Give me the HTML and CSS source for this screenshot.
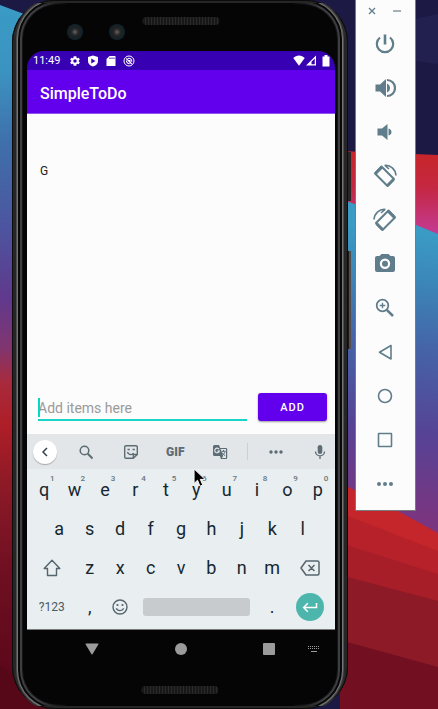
FILE: index.html
```html
<!DOCTYPE html>
<html lang="en">
<head>
<meta charset="utf-8">
<meta name="viewport" content="width=device-width, initial-scale=1">
<title>SimpleToDo</title>
<link rel="stylesheet" href="styles.css">
</head>
<body>
<svg class="wallpaper" viewBox="0 0 438 709" preserveAspectRatio="none" aria-hidden="true">
  <defs>
    <linearGradient id="left" x1="0" y1="0" x2="0" y2="709" gradientUnits="userSpaceOnUse">
      <stop offset="0" stop-color="#3a9cc6"/><stop offset=".1" stop-color="#3b93c0"/>
      <stop offset=".2" stop-color="#3f70ac"/><stop offset=".32" stop-color="#4c559f"/>
      <stop offset=".42" stop-color="#60398d"/><stop offset=".49" stop-color="#80356f"/>
      <stop offset=".54" stop-color="#a82a3c"/><stop offset=".6" stop-color="#ae1e27"/>
      <stop offset=".68" stop-color="#8e1a27"/><stop offset=".8" stop-color="#701022"/>
      <stop offset="1" stop-color="#560518"/>
    </linearGradient>
    <linearGradient id="right" x1="430" y1="235" x2="395" y2="515" gradientUnits="userSpaceOnUse">
      <stop offset="0" stop-color="#3a9bc4"/><stop offset=".17" stop-color="#3b86b9"/>
      <stop offset=".4" stop-color="#4564a7"/><stop offset=".7" stop-color="#564396"/>
      <stop offset="1" stop-color="#7a3580"/>
    </linearGradient>
    <linearGradient id="band" x1="0" y1="155" x2="0" y2="236" gradientUnits="userSpaceOnUse">
      <stop offset="0" stop-color="#c8262b"/><stop offset=".4" stop-color="#c42741"/>
      <stop offset="1" stop-color="#c43c98"/>
    </linearGradient>
  </defs>
  <path fill="#1c1a45" d="M0 0h438v709H0z"/>
  <path fill="#22204f" d="M410 20l28-6v50l-28-4z"/>
  <path fill="url(#left)" d="M0 5l24 9v695H0z"/>
  <path fill="url(#band)" d="M340 151l98 4v90h-98z"/>
  <path fill="url(#right)" d="M340 199l76 26 22 9v320h-98z"/>
  <path fill="#c4262b" d="M340 483l56 27 42 23v176h-98z"/>
  <path fill="#b72129" d="M340 513l98 38v158h-98z"/>
  <path fill="#a71e29" d="M340 543l98 31v135h-98z"/>
  <path fill="#8c1a27" d="M340 575l98 26v108h-98z"/>
  <path fill="#721022" d="M340 640l98 27v42h-98z"/>
  <path fill="#560818" d="M0 665l60 44H0z"/>
</svg>

<div class="desktop">
  <div class="phone">
    <span class="side-key side-key-power"></span>
    <span class="side-key side-key-volume"></span>
    <div class="bezel">
      <span class="camera"></span>
      <span class="camera"></span>
      <span class="speaker"></span>
    </div>

    <div class="screen">
      <div class="status-bar">
        <span class="time">11:49</span>
        <svg width="12" height="12" viewBox="0 0 24 24"><path fill="currentColor" fill-rule="evenodd" d="M19.4 13l.1-1-.1-1 2.300-1.700-2.200-3.800-2.700 1.100-1.700-1L14.700 2.700H9.300L8.900 5.600l-1.700 1-2.700-1.100-2.200 3.800L4.600 11l-.1 1 .1 1-2.300 1.700 2.200 3.800 2.700-1.100 1.700 1 .4 2.900h5.400l.4-2.900 1.700-1 2.700 1.100 2.200-3.800zM12 15.500a3.500 3.500 0 1 1 0-7 3.500 3.500 0 0 1 0 7z"/></svg>
        <svg width="12" height="12" viewBox="0 0 24 24"><path fill="currentColor" fill-rule="evenodd" d="M12 1L2 4v8c0 5.500 4 9.500 10 11 6-1.500 10-5.500 10-11V4zM8.500 7l8.500 5-8.500 5z"/></svg>
        <svg width="12" height="12" viewBox="0 0 24 24"><path fill="currentColor" fill-rule="evenodd" d="M20 2H9L3 8v14h17a1 1 0 0 0 1-1V3a1 1 0 0 0-1-1zM9 5h2v3H9zm4 0h2v3h-2zm4 0h2v3h-2z"/></svg>
        <svg width="12" height="12" viewBox="0 0 24 24" fill="none" stroke="currentColor"><circle cx="12" cy="12" r="10" stroke-width="2"/><path stroke-width="2.200" d="M6.500 7l11 11M9.500 7c4-1.500 9 1.500 7.800 6.500M6.800 11c0 4 3 6.500 6.500 6.200M11 11h3v3"/></svg>
        <span class="status-gap"></span>
        <svg width="12" height="11" viewBox="0 0 24 22"><path fill="currentColor" d="M12 21.500L.5 6C7-1 17-1 23.500 6z"/></svg>
        <svg width="10" height="11" viewBox="0 0 20 22"><path fill="currentColor" fill-rule="evenodd" d="M20 1v20H0zM17.500 7v11.500H11v-5z"/></svg>
        <svg class="battery" width="8" height="12" viewBox="0 0 16 24"><path fill="currentColor" d="M5 0h6v3h4v20H1V3h4z"/></svg>
      </div>
      <header class="app-bar"><h1>SimpleToDo</h1></header>
      <main class="content">
        <ul class="items"><li>G</li></ul>
        <form class="add-form">
          <div class="field">
            <input type="text" aria-label="Add items here" placeholder="Add items here">
            <span class="caret"></span>
          </div>
          <button class="add" type="button">ADD</button>
        </form>
      </main>

      <section class="keyboard" aria-label="Keyboard">
        <div class="tools">
          <button class="tool collapse" aria-label="Collapse"><svg width="10" height="12" viewBox="0 0 10 12"><path d="M7 2L3 6l4 4" fill="none" stroke="#37434a" stroke-width="1.500"/></svg></button>
          <button class="tool" aria-label="Search"><svg width="16" height="16" viewBox="0 0 16 16" fill="none" stroke="currentColor"><circle cx="6.500" cy="6.500" r="4.300" stroke-width="1.500"/><path stroke-width="2" d="M9.800 9.800l4.700 4.700"/></svg></button>
          <button class="tool" aria-label="Stickers"><svg width="16" height="16" viewBox="0 0 16 16" fill="none" stroke="currentColor" stroke-width="1.400"><path d="M3 1.700h10q1.300 0 1.300 1.300v7.500l-4 3.800H3q-1.300 0-1.300-1.300V3q0-1.300 1.300-1.300zM14 10.500h-3.700v3.600M4.500 8c.7 3 4.500 3.500 6 1"/><path d="M4.500 5.500h2.300M9.500 5.500h2.300"/></svg></button>
          <button class="tool gif">GIF</button>
          <button class="tool" aria-label="Translate"><svg width="16" height="16" viewBox="0 0 16 16"><path fill="currentColor" d="M2.500 1H7l1.200 3H14q1.200 0 1.200 1.200v8.600Q15.200 15 14 15H8.800L8 12H2.500Q1 12 1 10.500v-8Q1 1 2.500 1z"/><path fill="#e2e6e9" d="M8.500 5H14v9H9.800l1.400-2z"/><path fill="none" stroke="#e2e6e9" stroke-width="1.200" d="M7 5.200A2.300 2.300 0 1 0 7.300 7H5.200"/><path fill="none" stroke="currentColor" d="M9.500 7.300h4M11.500 6v1.300M13 7.500c-.3 1.500-1 2.500-2.600 3.800M10 8.500c1 1.500 2 2.500 3.200 3.300"/></svg></button>
          <span class="divider"></span>
          <button class="tool" aria-label="More"><svg width="14" height="4" viewBox="0 0 14 4" fill="currentColor"><circle cx="2" cy="2" r="1.700"/><circle cx="7" cy="2" r="1.700"/><circle cx="12" cy="2" r="1.700"/></svg></button>
          <button class="tool" aria-label="Voice input"><svg width="12" height="16" viewBox="0 0 12 16"><rect x="3.700" y="1" width="4.600" height="9" rx="2.300" fill="currentColor"/><path fill="none" stroke="currentColor" stroke-width="1.300" d="M1.500 7.500a4.500 4.300 0 0 0 9 0M6 12v3"/></svg></button>
        </div>
        <div class="row">
          <button class="key">q<sup>1</sup></button><button class="key">w<sup>2</sup></button><button class="key">e<sup>3</sup></button><button class="key">r<sup>4</sup></button><button class="key">t<sup>5</sup></button><button class="key">y<sup>6</sup></button><button class="key">u<sup>7</sup></button><button class="key">i<sup>8</sup></button><button class="key">o<sup>9</sup></button><button class="key">p<sup>0</sup></button>
        </div>
        <div class="row row-inset">
          <button class="key">a</button><button class="key">s</button><button class="key">d</button><button class="key">f</button><button class="key">g</button><button class="key">h</button><button class="key">j</button><button class="key">k</button><button class="key">l</button>
        </div>
        <div class="row">
          <button class="key key-wide" aria-label="Shift"><svg width="18" height="18" viewBox="0 0 18 18"><path fill="none" stroke="#55656d" stroke-width="1.400" stroke-linejoin="round" d="M9 1.200L1.200 9.500H4.500v7h9v-7h3.300z"/></svg></button><button class="key">z</button><button class="key">x</button><button class="key">c</button><button class="key">v</button><button class="key">b</button><button class="key">n</button><button class="key">m</button><button class="key key-wide" aria-label="Backspace"><svg width="20" height="16" viewBox="0 0 20 16"><path fill="none" stroke="#55656d" stroke-width="1.500" stroke-linejoin="round" d="M6 1h11.500q1.500 0 1.500 1.500v11q0 1.500-1.500 1.500H6L1 8zM8.500 5l6 6M14.500 5l-6 6"/></svg></button>
        </div>
        <div class="row">
          <button class="key key-wide key-symbols">?123</button><button class="key">,</button><button class="key" aria-label="Emoji"><svg width="16" height="16" viewBox="0 0 16 16"><circle cx="8" cy="8" r="7" fill="none" stroke="#55656d" stroke-width="1.400"/><circle cx="5.500" cy="6" r="1.100" fill="#55656d"/><circle cx="10.500" cy="6" r="1.100" fill="#55656d"/><path fill="none" stroke="#55656d" stroke-width="1.300" d="M4.300 9.300c1.200 3 6.200 3 7.400 0"/></svg></button><button class="key key-space" aria-label="Space"><span></span></button><button class="key">.</button><button class="key key-wide" aria-label="Enter"><span class="enter"><svg width="16" height="12" viewBox="0 0 16 12"><path fill="none" stroke="#fff" stroke-width="1.500" d="M14.500 2v4.500H2M5.800 2.300L1.600 6.500l4.200 4.200"/></svg></span></button>
        </div>
        <svg class="pointer" width="14" height="20" viewBox="0 0 15 22"><path fill="#000" stroke="#fff" d="M1 1v16l3.800-3.600L7.500 20l3-1.200L7.800 12.500H13z"/></svg>
      </section>
    </div>

    <nav class="nav-bar" aria-label="System">
      <button aria-label="Back"><svg width="14" height="12" viewBox="0 0 14 12"><path fill="#9b9b9b" d="M1 .5h12q.7.2.3 1L7.500 11.300q-.5.600-1 0L.7 1.500Q.3.700 1 .5z"/></svg></button>
      <button aria-label="Home"><svg width="12" height="12" viewBox="0 0 12 12"><circle cx="6" cy="6" r="6" fill="#9b9b9b"/></svg></button>
      <button aria-label="Overview"><svg width="12" height="12" viewBox="0 0 12 12"><rect width="12" height="12" rx="1" fill="#9b9b9b"/></svg></button>
      <button class="switch" aria-label="Switch keyboard"><svg width="14" height="8" viewBox="0 0 14 8"><path fill="none" stroke="#9b9b9b" stroke-dasharray="1 1" d="M1 1.500h12M1 3.500h12"/><path stroke="#9b9b9b" d="M4 6.500h6"/></svg></button>
    </nav>
    <span class="speaker speaker-bottom"></span>
  </div>

  <aside class="emulator" aria-label="Emulator controls">
    <div class="window-controls">
      <button aria-label="Close"><svg width="8" height="8" viewBox="0 0 8 8"><path stroke="currentColor" stroke-width="1.300" d="M1 1l6 6M7 1L1 7"/></svg></button>
      <button aria-label="Minimize"><svg width="8" height="8" viewBox="0 0 8 8"><path stroke="#a4b1b7" stroke-width="2" d="M0 4h8"/></svg></button>
    </div>
    <button aria-label="Power"><svg width="22" height="22" viewBox="0 0 22 22" fill="none" stroke="currentColor"><path stroke-width="2.200" d="M6 4.500a8.200 8.200 0 1 0 10 0"/><path stroke-width="2.600" d="M11 1.500v10"/></svg></button>
    <button aria-label="Volume up"><svg width="22" height="22" viewBox="0 0 22 22"><path fill="currentColor" d="M1.500 7.500H6L12 2v18l-6-5.500H1.500zM13 6.500q3 1.500 3 4.500t-3 4.500z"/><path fill="none" stroke="currentColor" stroke-width="2.200" d="M13 3a8 8 0 0 1 0 16"/></svg></button>
    <button aria-label="Volume down"><svg width="22" height="22" viewBox="0 0 22 22"><path fill="currentColor" d="M3.500 7.500H8L13.500 3v16L8 14.500H3.500zM14.500 7.500q3 1 3 3.500t-3 3.500z"/></svg></button>
    <button aria-label="Rotate left"><svg width="24" height="24" viewBox="0 0 24 24" fill="none" stroke="currentColor"><path stroke-width="2" stroke-linejoin="round" d="M8.500 2.500l12.500 12.500-6.500 7L2 9.500z"/><path stroke-width="3" d="M9 3L2.500 9.500M20.500 15.500L14.500 21.500"/><path stroke-width="1.600" d="M11.500 1.500c6-.8 11 3.700 11.500 10M12 1.500l4 3.500"/></svg></button>
    <button aria-label="Rotate right"><svg width="24" height="24" viewBox="0 0 24 24" fill="none" stroke="currentColor"><path stroke-width="2" stroke-linejoin="round" d="M15.500 2.500L3 15l6.500 7L22 9.500z"/><path stroke-width="3" d="M15 3l6.500 6.500M3.500 15.500l6 6"/><path stroke-width="1.600" d="M12.500 1.500C6.500.7 1.500 5.200 1 11.500M12 1.500L8 5"/></svg></button>
    <button aria-label="Screenshot"><svg width="22" height="22" viewBox="0 0 22 22"><path fill="currentColor" fill-rule="evenodd" d="M7.500 1h7l2 2H19q2 0 2 2v12q0 2-2 2H3q-2 0-2-2V5q0-2 2-2h2.500zM11 5.500a5.200 5.200 0 1 0 0 10.400A5.200 5.200 0 0 0 11 5.500zM11 7.700a3 3 0 1 1 0 6a3 3 0 0 1 0-6z" /></svg></button>
    <button aria-label="Zoom"><svg width="22" height="22" viewBox="0 0 22 22" fill="none" stroke="currentColor"><circle cx="8.500" cy="8.500" r="5.800" stroke-width="1.800"/><path stroke-width="2.500" d="M12.800 12.800l6.200 6.200"/><path stroke-width="1.300" d="M8.500 5.700v5.600M5.700 8.500h5.600"/></svg></button>
    <button aria-label="Back"><svg width="22" height="22" viewBox="0 0 22 22"><path fill="none" stroke="currentColor" stroke-width="1.600" stroke-linejoin="round" d="M17 4.500v13.500L5.500 11.200z"/></svg></button>
    <button aria-label="Home"><svg width="22" height="22" viewBox="0 0 22 22"><circle cx="11" cy="11" r="6.500" fill="none" stroke="currentColor" stroke-width="1.600"/></svg></button>
    <button aria-label="Overview"><svg width="22" height="22" viewBox="0 0 22 22"><rect x="4.500" y="4.500" width="13" height="13" rx=".5" fill="none" stroke="currentColor" stroke-width="1.600"/></svg></button>
    <button aria-label="More"><svg width="16" height="4" viewBox="0 0 16 4" fill="currentColor"><circle cx="2" cy="2" r="2"/><circle cx="8" cy="2" r="2"/><circle cx="14" cy="2" r="2"/></svg></button>
  </aside>
</div>
</body>
</html>
```
FILE: styles.css
```css
* { box-sizing: border-box; }

body {
  margin: 0;
  background: #1c1a45;
  font-family: Roboto, "Liberation Sans", sans-serif;
  overflow: hidden;
}

button {
  display: flex;
  align-items: center;
  justify-content: center;
  margin: 0;
  padding: 0;
  border: 0;
  background: none;
  color: inherit;
  font: inherit;
}

svg { display: block; flex: none; }

.wallpaper {
  position: fixed;
  inset: 0;
  width: 100%;
  height: 100%;
}

.desktop {
  position: relative;
  display: flex;
  align-items: flex-start;
  gap: 7px;
  min-height: 100vh;
  padding: 0 22px 0 12px;
}

/* Phone body */
.phone {
  position: relative;
  flex: 1;
  align-self: stretch;
  display: flex;
  flex-direction: column;
  min-width: 0;
  padding: 0 13px 0 15px;
  border-radius: 42px;
  background: #050505;
  box-shadow:
    inset 0 0 0 1px #0c0c0c,
    inset 0 0 0 3px #262626;
}

/* Metal rings run down the sides and fade out along the short edges */
.phone::before {
  content: "";
  position: absolute;
  inset: -3px 3px;
  border-radius: 42px;
  box-shadow:
    inset 0 0 0 1px #262626,
    inset 0 0 0 2px #4c4c4c,
    inset 0 0 0 3px #767676,
    inset 0 0 0 5px #080808,
    inset 0 0 0 7px #3d3e42,
    inset 0 0 0 8px #161616;
  clip-path: inset(6px 0);
  mask-image: linear-gradient(90deg, #000 24px, transparent 54px calc(100% - 54px), #000 calc(100% - 24px));
}

.bezel {
  position: relative;
  display: flex;
  gap: 26px;
  height: 51px;
  padding: 24px 0 0 40px;
}

.camera {
  width: 16px;
  height: 16px;
  border-radius: 50%;
  background: radial-gradient(circle, #555 0 1px, #2a2a2c 3px, #202020 5px, #14222a 6px);
}

.speaker {
  position: absolute;
  top: 17px;
  left: 50%;
  width: 77px;
  height: 8px;
  border-radius: 4px;
  background: repeating-linear-gradient(90deg, #2a2a2a 0 1px, #181818 1px 3px);
  transform: translateX(-50%);
}

.speaker-bottom { top: auto; bottom: 15px; }

.side-key {
  position: absolute;
  left: 100%;
  width: 3px;
  background: #292526;
}

.side-key-power { top: 152px; height: 49px; }
.side-key-volume { top: 251px; height: 98px; background: #554d4c; border-left: 1px solid #1a1a1a; }

.screen {
  position: relative;
  flex: 1;
  display: flex;
  flex-direction: column;
  overflow: hidden;
  border-radius: 17px 17px 0 0;
  border-bottom: 1px solid #77797b;
}

.status-bar {
  display: flex;
  align-items: center;
  gap: 5px;
  height: 19px;
  padding: 0 5px 0 6px;
  background: #3700b3;
  color: #fff;
  font-size: 11px;
}

.time { margin-right: 4px; }
.status-bar svg + svg { margin-left: 1px; }
.status-bar .status-gap { flex: 1; }
.status-bar .status-gap + svg { margin-right: -5px; }

.app-bar {
  display: flex;
  align-items: center;
  height: 44px;
  padding: 3px 13px 0;
  border-bottom: 1px solid #8d55f0;
  background: #6200ee;
  color: #fff;
}

h1 { margin: 0; font-size: 16px; font-weight: 500; }

.content {
  flex: 1;
  display: flex;
  flex-direction: column;
  justify-content: space-between;
  padding: 48px 8px 13px 11px;
  background: #fcfcfc;
}

.items {
  margin: 0;
  padding: 0 2px;
  list-style: none;
  color: #222;
  font-size: 12px;
  line-height: 18px;
}

.add-form { display: flex; align-items: flex-start; gap: 11px; }

.field {
  position: relative;
  flex: 1;
  min-width: 0;
  border-bottom: 2px solid #18d5c7;
}

.field input {
  display: block;
  width: 100%;
  height: 26px;
  padding: 4px 0 0;
  border: 0;
  outline: 0;
  background: none;
  font: 14px Roboto, sans-serif;
}

.field input::placeholder { color: #9a9a9a; opacity: 1; }

.caret {
  position: absolute;
  top: 5px;
  left: 0;
  width: 2px;
  height: 19px;
  background: #03dac5;
}

.add {
  width: 69px;
  height: 28px;
  border-radius: 3px;
  background: #6200ee;
  box-shadow: 0 1px 2px #0006;
  color: #fff;
  font-size: 11px;
  font-weight: 500;
  letter-spacing: 1px;
}

/* Keyboard */
.keyboard {
  position: relative;
  padding-bottom: 3px;
  background: #e9eef1;
  color: #16272f;
}

.tools {
  display: flex;
  align-items: center;
  justify-content: space-between;
  height: 35px;
  margin-bottom: 1px;
  padding: 0 3px 0 6px;
  background: #e2e6e9;
  color: #5d6c74;
}

.tool { width: 24px; height: 24px; }
.collapse { margin-right: -3px; border-radius: 50%; background: #fff; box-shadow: 0 1px 1px #0004; }
.gif { font-size: 12px; font-weight: 900; }
.divider { width: 1px; height: 17px; margin: 0 -5px; background: #cbd0d3; }

.row { display: flex; padding: 0 2px; }
.row-inset { padding: 0 17px; }

.key {
  position: relative;
  flex: 2 1 0;
  min-width: 0;
  height: 39px;
  font-size: 18px;
}

.key-wide { flex-grow: 3; }
.key-space { flex-grow: 8; }
.key-space span { width: 88%; height: 18px; border-radius: 3px; background: #c7cbce; }
.key-symbols { color: #4b5b63; font-size: 12px; }

sup {
  position: absolute;
  top: 4px;
  left: 21px;
  color: #67757c;
  font-size: 8px;
  font-weight: 500;
  line-height: 10px;
}

.enter {
  display: grid;
  place-items: center;
  width: 28px;
  height: 28px;
  border-radius: 50%;
  background: #4db6ac;
}

.pointer { position: absolute; top: 34px; left: 54%; }

/* System navigation */
.nav-bar {
  display: flex;
  justify-content: space-between;
  height: 79px;
  padding: 0 14px 42px 58px;
}

.nav-bar .switch { margin-left: -44px; }

/* Emulator toolbar */
.emulator {
  width: 61px;
  padding: 0 2px 4px 0;
  border: 1px solid #77797b;
  border-top: 0;
  background: #fcfcfc;
  color: #607d8b;
}

.emulator > button { width: 100%; height: 44px; }

.window-controls {
  display: flex;
  justify-content: center;
  gap: 17px;
  height: 22px;
}
```
